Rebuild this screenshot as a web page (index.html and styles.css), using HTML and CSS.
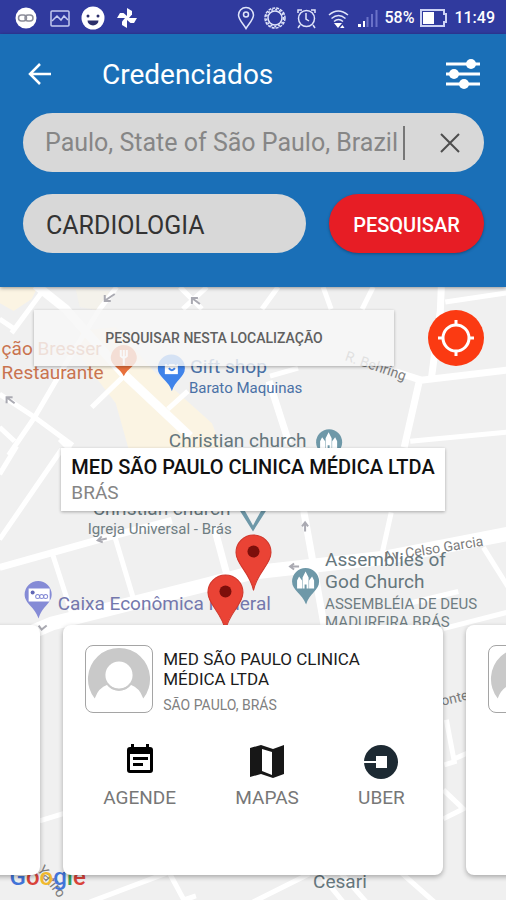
FILE: index.html
```html
<!DOCTYPE html>
<html lang="pt-BR">
<head>
<meta charset="utf-8">
<meta name="viewport" content="width=device-width, initial-scale=1">
<title>Credenciados</title>
<link rel="stylesheet" href="styles.css">
</head>
<body>
<div class="status">
  <svg class="status-icons" width="124" height="24" viewBox="14 5 124 24" aria-hidden="true">
    <circle cx="26" cy="17" r="10.500" fill="#fff"/>
    <g fill="none" stroke="#8c8d99" stroke-width="1.500"><rect x="18.500" y="14" width="8" height="6" rx="3"/><rect x="25" y="14" width="8" height="6" rx="3"/></g>
    <g fill="none" stroke="#c3cbf0" stroke-width="1.500"><rect x="51" y="10" width="18" height="15" rx="1"/><path d="M52 20l5-5 4 4 3-4 4 4"/></g>
    <circle cx="93" cy="17" r="11.500" fill="#fff"/>
    <path d="M87.500 19.500h11a5.500 5 0 0 1-11 0z" fill="#2c2f6b"/>
    <circle cx="88" cy="15" r="1.500" fill="#2c2f6b"/><circle cx="98" cy="15" r="1.500" fill="#2c2f6b"/>
    <g fill="#fff"><path id="blade" d="M127 17V7l5 3v3.500l-3 3.500z"/><use href="#blade" transform="rotate(90 127 17)"/><use href="#blade" transform="rotate(180 127 17)"/><use href="#blade" transform="rotate(270 127 17)"/></g>
  </svg>
  <div class="status-end">
    <svg width="142" height="24" viewBox="237 5 142 24" aria-hidden="true">
      <g fill="none" stroke="#dfe4fa" stroke-width="1.500">
        <path d="M247 27.500c-3-5-7.500-9-7.500-13.500a7.500 7.500 0 0 1 15 0c0 4.500-4.500 8.500-7.500 13.500z"/><circle cx="247" cy="13.500" r="2.500"/>
        <circle cx="276" cy="17" r="7"/><circle cx="276" cy="17" r="10" stroke-dasharray="3 1"/><circle cx="276" cy="17" r="8.500" stroke-dasharray="2 2"/>
        <circle cx="307.500" cy="17.500" r="8"/><path d="M307 12v6l3 2M299 12v-3h4M312 9h4v3M301 24l-2 3M314 24l2 3"/>
        <path d="M330 14q9-8 19 0M332.500 17.500q7-6 14 0M335 20.500q4.500-4 9 0"/>
      </g>
      <path d="M335 22h8l-4 5zM341 27l2.500-3 2 3z" fill="#fff"/>
      <path d="M359 26v-3h3v3zM364 26v-6h2v6z" fill="#fff"/>
      <path d="M368.500 26V16M373 26V13M377.500 26V9" stroke="#6a72c8" stroke-width="2"/>
    </svg>
    <span>58%</span>
    <svg class="battery" width="28" height="18" viewBox="0 0 28 18" aria-hidden="true">
      <path d="M1 1h23v4h2v8h-2v4H1z" fill="none" stroke="#cdd3f4" stroke-width="2"/><path d="M3 3h11v12H3z" fill="#fff"/>
    </svg>
    <time>11:49</time>
  </div>
</div>
<header class="header">
  <div class="bar">
    <button class="icon-button" aria-label="Voltar">
      <svg width="24" height="24" viewBox="0 0 24 24" aria-hidden="true"><path d="M23 12H3M12 2L2 12l10 10" fill="none" stroke="#fff" stroke-width="2.500"/></svg>
    </button>
    <h1>Credenciados</h1>
    <button class="icon-button" aria-label="Filtros">
      <svg width="36" height="32" viewBox="0 0 36 32" aria-hidden="true"><path d="M1 6h34M1 16h34M1 26h34" stroke="#fff" stroke-width="3"/><g fill="#fff"><circle cx="26" cy="6" r="5"/><circle cx="9" cy="16" r="5"/><circle cx="19" cy="26" r="5"/></g></svg>
    </button>
  </div>
  <form class="search">
    <div class="field place">
      <input type="text" aria-label="Localização" value="Paulo, State of São Paulo, Brazil">
      <span class="caret"></span>
      <button type="button" class="icon-button clear" aria-label="Limpar">
        <svg width="20" height="20" viewBox="0 0 20 20" aria-hidden="true"><path d="M1 1l18 18M19 1L1 19" stroke="#4d4d4d" stroke-width="2"/></svg>
      </button>
    </div>
    <div class="row">
      <select class="field specialty" aria-label="Especialidade"><option>CARDIOLOGIA</option></select>
      <button type="button" class="submit">PESQUISAR</button>
    </div>
  </form>
</header>
<main class="map">
  <svg class="canvas" viewBox="0 288 506 612" preserveAspectRatio="xMidYMin slice" role="img" aria-label="Mapa">
    <rect y="288" width="506" height="612" fill="#f0f0f0"/>
    <g fill="#fbf4e3">
      <path d="M0 288h38l-6 12-18 12-14-8zM80 332l36-4 38 44 58 52 10 26-92 4-14-50-34-44z"/>
      <path d="M76 290l34 2-8 20-22-4z" opacity=".4"/>
    </g>
    <g fill="none" stroke="#fff" stroke-width="5">
      <path d="M0 320l15 10M43 292L12 334M117 288l-17 22-30 48-35 60-26 38M180 288l22 22M207 288l-24 22M123 378l-31 30M0 395l35 23 38 28M0 428l15 14M168 410l20-18M278 288l-16 22M323 288l8 22M373 288l-11 22M445 303l61-9M270 377l28-8M410 442l96-9M0 475l17-28M0 540l62-90M60 440l12 12M53 555l20 62M115 537l18 60M391 513l-10 45M483 548l30 48M443 629l63-16M408 604l50-12"/>
      <path d="M90 902l80-30M169 872l15 28 12-4M253 902l56-28M317 870l26 32M338 870l28 32M400 872l34 30M40 821l26-8M446 720l8 42-10 3M452 760l18-8M443 790l20 19-20 10"/>
    </g>
    <g fill="none" stroke="#fff" stroke-width="7">
      <path d="M0 568l100-28 72-19M396 373l25 8 85-10M441 288l-1 24-9 68M419 382l-15 66M269 382l20 62M303 508l9 50 12 68M214 527l14 52"/>
      <path d="M36 286l30 24 58 65 66 62" stroke-width="9"/>
      <path d="M-4 648l56-24 155-39 46-12 133-15 124-24" stroke-width="14"/>
    </g>
    <g fill="none" stroke="#aaaab2" stroke-width="2">
      <path d="M115 295l-9 6m5 1h-6v-6M200 305l-8-6m0 6v-6h6M15 404l-8-6m0 6v-6h6M305 532v-9m-3 4l3-4 3 4M299 567h-9m4-3l-4 3 4 3M107 539l-9 2m4-4l-4 4 5 2M39 626l3 4 5-4"/>
    </g>
    <path d="M111 359a13 13 0 1 1 26 0c0 7-9 10-13 18-4-8-13-11-13-18z" fill="#e8703c"/><path d="M121 351v6q3 3 6 0v-6M124 351v15" stroke="#fff" stroke-width="2" fill="none"/>
    <path d="M158 369a13 13 0 1 1 27 0c0 9-10 12-13 23-3-11-14-14-14-23z" fill="#3f83ea"/><path d="M165 365h13v10h-13z" fill="#fff"/><path d="M168 366a4 4 0 0 1 8 0M169 369q3 4 6 0" fill="none" stroke="#3f83ea" stroke-width="2"/>
    <g fill="#6e98a8">
      <circle cx="329" cy="443" r="13"/>
      <path d="M239 510l14 22v-6l-9-16zM267 510l-14 22v-6l9-16z"/>
      <path d="M292 582a13 13 0 1 1 27 0c0 9-10 12-13 23-4-11-14-14-14-23z"/>
    </g>
    <g fill="#fff"><path id="church" d="M297 589v-8l2-4 3 4v8zM302.500 589v-11l3-6 3 6v11h-2v-4h-2v4zM309 589v-8l3-4 2 4v8z"/><use href="#church" x="23" y="-139"/></g>
    <path d="M25 595a13 13 0 1 1 27 0c0 9-10 12-13 24-4-12-14-15-14-24z" fill="#858bd6"/><path d="M29 589h21v13H29z" fill="#fff"/><circle cx="33" cy="593" r="2" fill="#6067b5"/>
    <g fill="none" stroke="#858bd6"><circle cx="38" cy="597" r="2"/><circle cx="42" cy="597" r="2"/><circle cx="46" cy="597" r="2"/></g>
    <g class="labels">
      <g fill="#c9734f" font-size="19"><text x="2" y="356">ção Bresser</text><text x="2" y="380">Restaurante</text></g>
      <g fill="#4a71a6"><text x="190" y="374" font-size="19">Gift shop</text><text x="189" y="394" font-size="15">Barato Maquinas</text></g>
      <g fill="#66777d" font-size="19">
        <text x="169" y="448">Christian church</text><text x="93" y="516">Christian church</text>
        <text x="325" y="567">Assemblies of</text><text x="325" y="589">God Church</text><text x="313" y="888">Cesari</text>
      </g>
      <g fill="#6f7d82" font-size="15"><text x="88" y="535">Igreja Universal - Brás</text><text x="325" y="609">ASSEMBLÉIA DE DEUS</text><text x="325" y="627">MADUREIRA BRÁS</text></g>
      <text x="58" y="610" font-size="19" fill="#7478ad">Caixa Econômica Federal</text>
      <g fill="#7c7c7c" font-size="14">
        <text transform="translate(344 361) rotate(19)">R. Behring</text>
        <text transform="translate(384 562) rotate(-9)">Av. Celso Garcia</text>
        <text transform="translate(442 706) rotate(-13)">onte</text>
        <text transform="translate(37 870) rotate(52)">Yatiro</text>
      </g>
      <text x="10" y="885" font-size="24" font-weight="500"><tspan fill="#4274d8">G</tspan><tspan fill="#d9433a">o</tspan><tspan fill="#f0b92e">o</tspan><tspan fill="#4274d8">g</tspan><tspan fill="#389e57">l</tspan><tspan fill="#d9433a">e</tspan></text>
    </g>
    <g id="marker"><path d="M236 553a17.500 17.500 0 0 1 35 0c0 12-14 20-17.500 38C250 573 236 565 236 553z" fill="#ea4335" stroke="#cf372c"/><circle cx="253.500" cy="552" r="6" fill="#7d0f0b"/></g>
    <use href="#marker" x="-28" y="40"/>
  </svg>
  <div class="tools">
    <button class="here">PESQUISAR NESTA LOCALIZAÇÃO</button>
    <button class="locate" aria-label="Minha localização">
      <svg width="38" height="38" viewBox="0 0 38 38" aria-hidden="true"><circle cx="19" cy="19" r="13" fill="none" stroke="#fff" stroke-width="3"/><path d="M19 1v6M19 31v6M1 19h6M31 19h6" stroke="#fff" stroke-width="3"/></svg>
    </button>
  </div>
  <div class="popup"><strong>MED SÃO PAULO CLINICA MÉDICA LTDA</strong><span>BRÁS</span></div>
  <div class="cards">
    <article class="card"></article>
    <article class="card">
      <div class="person">
        <svg class="avatar" viewBox="0 0 68 68" aria-hidden="true"><path id="face" d="M9 54A32 32 0 1 1 59 54Q55 43 46 40A15 15 0 0 1 22 40Q13 43 9 54z" fill="#c9c9c9"/><circle cx="34" cy="30" r="14" fill="#fff"/><path d="M22 39a15 15 0 0 0 24 0" fill="none" stroke="#c9c9c9" stroke-width="2"/></svg>
        <div>
          <h2>MED SÃO PAULO CLINICA MÉDICA LTDA</h2>
          <p>SÃO PAULO, BRÁS</p>
        </div>
      </div>
      <div class="actions">
        <button><svg width="36" height="36" viewBox="0 0 36 36" aria-hidden="true"><path fill-rule="evenodd" d="M9 1h3v3h12V1h3v3h1q3 0 3 3v20q0 3-3 3H8q-3 0-3-3V7q0-3 3-3h1zM8 11v16h20V11z"/><path d="M11 14h15v3H11zM11 20h10v3H11z"/></svg>AGENDE</button>
        <button><svg width="36" height="36" viewBox="0 0 36 36" aria-hidden="true"><path fill="#171717" fill-rule="evenodd" d="M1 5l11-3 12 4 11-4v29l-11 4-12-4-11 3zM13 6v22l10 4V9z"/></svg>MAPAS</button>
        <button><svg width="36" height="36" viewBox="0 0 36 36" aria-hidden="true"><circle cx="18" cy="19" r="17" fill="#1d2a33"/><path d="M0 18h13v-5h11v12H13v-5H0z" fill="#fff"/></svg>UBER</button>
      </div>
    </article>
    <article class="card">
      <div class="person">
        <svg class="avatar" viewBox="0 0 68 68" aria-hidden="true"><use href="#face"/></svg>
      </div>
    </article>
  </div>
</main>
</body>
</html>
```
FILE: styles.css
```css
* { box-sizing: border-box; }
body {
  margin: 0;
  min-height: 100vh;
  display: flex;
  flex-direction: column;
  font-family: Roboto, "Liberation Sans", sans-serif;
  background: #f0f0f0;
}
button, input, select { font: inherit; border: 0; margin: 0; padding: 0; }
svg { display: block; flex: none; }
h1, h2, p { margin: 0; font-weight: 400; }

.status {
  display: flex;
  align-items: center;
  justify-content: space-between;
  height: 34px;
  padding: 1px 11px 0 14px;
  background: #303a9e;
  color: #fff;
  font-size: 16px;
  font-weight: 500;
}
.status-end { display: flex; align-items: center; gap: 6px; }

.header {
  position: relative;
  z-index: 1;
  padding: 20px 22px 34px 23px;
  background: #1a6fb7;
  box-shadow: 0 1px 4px rgba(0, 0, 0, .4);
}
.bar { display: flex; align-items: center; height: 40px; padding: 0 3px 0 5px; }
.bar h1 { flex: 1; padding-top: 2px; margin-left: 50px; color: #fff; font-size: 28px; line-height: 40px; }
.icon-button { background: none; }
.search { display: grid; gap: 22px; margin-top: 19px; }
.row { display: flex; gap: 23px; }
.field { height: 59px; border-radius: 30px; background: #d8d8d8; }
.place { display: flex; align-items: center; padding: 0 24px 0 22px; }
.place input { flex: 1; min-width: 0; background: none; color: #868686; font-size: 25px; outline: 0; }
.caret { width: 2px; height: 34px; background: #777; }
.clear { margin-left: 35px; }
.specialty { flex: 1; min-width: 0; padding: 3px 23px 0; appearance: none; color: #333; font-size: 25px; }
.submit {
  width: 155px;
  padding-top: 3px;
  border-radius: 30px;
  background: #e71d25;
  color: #fff;
  font-size: 20px;
  font-weight: 500;
  box-shadow: 0 1px 3px rgba(0, 0, 0, .3);
}

.map { position: relative; flex: 1; overflow: hidden; padding-bottom: 24px; }
.canvas { position: absolute; inset: 0; width: 100%; height: 100%; }
.tools, .popup, .cards { position: relative; }
.tools { display: flex; gap: 34px; padding: 23px 22px 0 34px; }
.here {
  flex: 1;
  background: rgba(246, 246, 246, .82);
  color: #606060;
  font-size: 14px;
  font-weight: 500;
  box-shadow: 0 1px 3px rgba(0, 0, 0, .3);
}
.locate {
  display: grid;
  place-items: center;
  width: 56px;
  height: 56px;
  border-radius: 50%;
  background: #fb3a12;
}
.popup {
  display: flex;
  flex-direction: column;
  width: fit-content;
  margin: 82px auto 0;
  padding: 6px 10px 5px;
  background: #fff;
  font-size: 19px;
  line-height: 26px;
  box-shadow: 0 1px 3px rgba(0, 0, 0, .3);
}
.popup strong { color: #111; font-size: 20px; font-weight: 500; }
.popup span { color: #858585; }

.cards { display: flex; justify-content: center; gap: 23px; margin-top: 114px; }
.card {
  flex: 0 0 75%;
  height: 250px;
  padding: 20px 22px;
  border-radius: 8px;
  background: #fff;
  box-shadow: 0 2px 5px rgba(0, 0, 0, .3);
}
.person { display: flex; gap: 10px; }
.avatar { width: 68px; height: 68px; border: 1px solid #a5a5a5; border-radius: 8px; }
.person h2 { margin-top: 4px; color: #1c1c1c; font-size: 17px; line-height: 20px; }
.person p { margin-top: 6px; color: #808080; font-size: 14px; line-height: 20px; }
.actions { display: flex; justify-content: space-between; padding: 0 16px 0 18px; margin-top: 28px; }
.actions button {
  display: grid;
  justify-items: center;
  gap: 7px;
  background: none;
  color: #777;
  font-size: 19px;
  line-height: 24px;
}
.labels text { font-family: Roboto, "Liberation Sans", sans-serif; }
```
